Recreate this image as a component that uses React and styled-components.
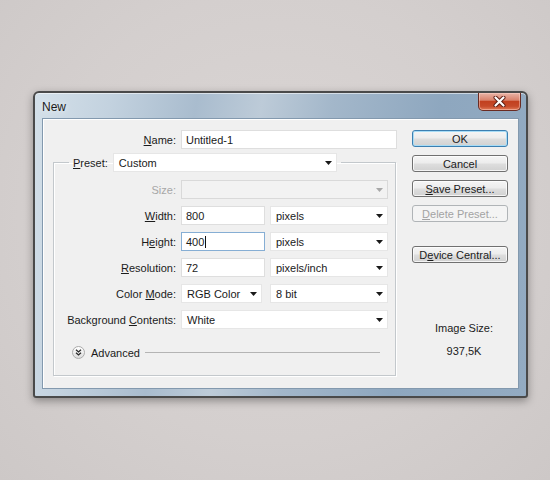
import React from 'react';
import styled, { createGlobalStyle, css } from 'styled-components';

const Global = createGlobalStyle`
  html, body { margin: 0; padding: 0; }
  body {
    width: 550px;
    height: 480px;
    overflow: hidden;
    background: #d4cfce;
    font-family: "Liberation Sans", Arial, sans-serif;
  }
`;

const Page = styled.div`
  width: 550px;
  height: 480px;
  box-sizing: border-box;
  padding: 91px 0 0 33px;
  background: radial-gradient(ellipse at 50% 45%, #dbd6d5 0%, #d4cfce 60%, #cdc8c7 100%);
`;

const Window = styled.div`
  width: 495px;
  height: 307px;
  box-sizing: border-box;
  border: 2px solid #4a4a4a;
  border-radius: 6px 6px 3px 3px;
  background: linear-gradient(100deg, #d4e0e9 0%, #c3d2df 14%, #a9bcce 30%, #bdcbd8 42%, #a3b7ca 55%, #8ea7bf 75%, #93abc2 100%);
  box-shadow: 0 3px 9px rgba(0, 0, 0, 0.35), inset 0 1px 0 rgba(255, 255, 255, 0.55);
  display: flex;
  flex-direction: column;
`;

const TitleBar = styled.div`
  height: 25px;
  flex: none;
  display: flex;
  align-items: flex-start;
  justify-content: space-between;
  padding: 0 5px 0 7px;
`;

const Title = styled.span`
  margin-top: 7px;
  font-size: 12px;
  line-height: 14px;
  color: #1b1b1b;
  text-shadow: 0 0 6px rgba(255, 255, 255, 0.9);
`;

const CloseButton = styled.div`
  width: 43px;
  height: 18px;
  box-sizing: border-box;
  border: 1px solid #6a2b22;
  border-top: none;
  border-radius: 0 0 5px 5px;
  background: linear-gradient(#e9b4a7 0%, #d9826c 42%, #c2401f 50%, #c64a2a 78%, #e27b58 100%);
  box-shadow: inset 0 0 0 1px rgba(255, 220, 210, 0.45);
  display: flex;
  align-items: center;
  justify-content: center;
`;

const Frame = styled.div`
  flex: 1;
  display: flex;
  padding: 0 7px 7px 7px;
  min-height: 0;
`;

const Client = styled.div`
  flex: 1;
  display: flex;
  gap: 15px;
  padding: 11px 0 0 10px;
  border: 1px solid #8399ae;
  background: #f0f0f0;
  box-shadow: inset 1px 1px 0 #ffffff;
  font-size: 11px;
  color: #1b1b1b;
`;

const LeftColumn = styled.div`
  width: 344px;
  display: flex;
  flex-direction: column;
`;

const NameRow = styled.div`
  display: grid;
  grid-template-columns: 123px 216px;
  column-gap: 5px;
  height: 19px;
  align-items: center;
`;

const Label = styled.div`
  text-align: right;
  white-space: nowrap;
  color: ${(p) => (p.$disabled ? '#a7a7a7' : '#1b1b1b')};
  align-self: center;
`;

const Key = styled.span`
  text-decoration: underline;
  text-underline-offset: 1px;
`;

const Field = styled.div`
  height: 19px;
  width: ${(p) => (p.$w ? `${p.$w}px` : 'auto')};
  box-sizing: border-box;
  display: flex;
  align-items: center;
  padding: 0 4px;
  background: #ffffff;
  border: 1px solid ${(p) => (p.$focused ? '#86aed4' : '#dedede')};
  color: #1a1a1a;
  white-space: nowrap;
`;

const Caret = styled.span`
  display: inline-block;
  width: 1px;
  height: 12px;
  margin-left: 1px;
  background: #111;
`;

const Select = styled.div`
  height: 19px;
  width: ${(p) => (p.$w ? `${p.$w}px` : 'auto')};
  box-sizing: border-box;
  display: flex;
  align-items: center;
  justify-content: space-between;
  padding: 0 4px 0 5px;
  background: ${(p) => (p.$disabled ? '#f2f2f2' : '#ffffff')};
  border: 1px solid ${(p) => (p.$disabled ? '#d9d9d9' : '#e6e6e6')};
  color: #1a1a1a;
  white-space: nowrap;
`;

const GroupBox = styled.fieldset`
  margin: 4px 0 0 0;
  padding: 0;
  width: 343px;
  min-width: 0;
  box-sizing: border-box;
  border: 1px solid #c3c8cc;
  box-shadow: 1px 1px 0 #ffffff, inset 1px 1px 0 #ffffff;
`;

const Legend = styled.legend`
  margin-left: 15px;
  padding: 0 4px;
`;

const LegendInner = styled.div`
  display: flex;
  align-items: center;
  gap: 5px;
  height: 19px;
`;

const FieldGrid = styled.div`
  display: grid;
  grid-template-columns: 122px 207px;
  grid-auto-rows: 19px;
  column-gap: 5px;
  row-gap: 7px;
  padding: 8px 7px 0 0;
`;

const ControlPair = styled.div`
  display: flex;
  justify-content: space-between;
`;

const AdvancedRow = styled.div`
  display: flex;
  align-items: center;
  gap: 6px;
  height: 13px;
  margin-top: 17px;
  padding: 0 15px 16px 18px;
`;

const ChevronBadge = styled.div`
  width: 13px;
  height: 13px;
  flex: none;
  box-sizing: border-box;
  border-radius: 50%;
  border: 1px solid #ababab;
  background: linear-gradient(#ffffff, #dcdcdc);
  display: flex;
  align-items: center;
  justify-content: center;
`;

const Rule = styled.div`
  flex: 1;
  height: 1px;
  margin-left: -1px;
  background: #b4b4b4;
`;

const RightColumn = styled.div`
  width: 96px;
  display: flex;
  flex-direction: column;
  gap: 8px;
`;

const Button = styled.div`
  height: 17px;
  box-sizing: border-box;
  display: flex;
  align-items: center;
  justify-content: center;
  border: 1px solid #707070;
  border-radius: 3px;
  background: linear-gradient(#f5f5f5 0%, #ececec 48%, #dedede 52%, #d1d1d1 100%);
  box-shadow: inset 0 0 0 1px rgba(255, 255, 255, 0.75);
  color: #1b1b1b;
  white-space: nowrap;
  margin-top: ${(p) => (p.$gapBefore ? `${p.$gapBefore}px` : '0')};
  ${(p) =>
    p.$primary &&
    css`
      border-color: #3c7fb1;
      box-shadow: inset 0 0 0 1px #a7dcf6;
    `}
  ${(p) =>
    p.$disabled &&
    css`
      border-color: #b0b4b7;
      background: #f4f4f4;
      box-shadow: none;
      color: #a3a3a3;
    `}
`;

const ImageSize = styled.div`
  margin-top: 51px;
  padding-left: 8px;
  display: flex;
  flex-direction: column;
  align-items: center;
  gap: 10px;
  line-height: 13px;
`;

const Arrow = ({ disabled }) => (
  <svg width="7" height="4" viewBox="0 0 7 4">
    <polygon points="0,0 7,0 3.5,4" fill={disabled ? '#a8a8a8' : '#1a1a1a'} />
  </svg>
);

const CloseGlyph = () => (
  <svg width="13" height="11" viewBox="0 0 13 11">
    <path d="M2.5 1.5 L10.5 9.5 M10.5 1.5 L2.5 9.5" stroke="#5a1b12" strokeWidth="4" strokeLinecap="round" />
    <path d="M2.5 1.5 L10.5 9.5 M10.5 1.5 L2.5 9.5" stroke="#ffffff" strokeWidth="2.2" strokeLinecap="round" />
  </svg>
);

const DoubleChevron = () => (
  <svg width="7" height="7" viewBox="0 0 7 7">
    <path d="M1 0.8 L3.5 3 L6 0.8 M1 3.8 L3.5 6 L6 3.8" fill="none" stroke="#2a2a2a" strokeWidth="1.3" />
  </svg>
);

export default function App() {
  return (
    <>
      <Global />
      <Page>
        <Window>
          <TitleBar>
            <Title>New</Title>
            <CloseButton>
              <CloseGlyph />
            </CloseButton>
          </TitleBar>
          <Frame>
            <Client>
              <LeftColumn>
                <NameRow>
                  <Label>
                    <Key>N</Key>ame:
                  </Label>
                  <Field>Untitled-1</Field>
                </NameRow>
                <GroupBox>
                  <Legend>
                    <LegendInner>
                      <Label>
                        <Key>P</Key>reset:
                      </Label>
                      <Select $w={224}>
                        Custom
                        <Arrow />
                      </Select>
                    </LegendInner>
                  </Legend>
                  <FieldGrid>
                    <Label $disabled>Size:</Label>
                    <Select $disabled>
                      <span />
                      <Arrow disabled />
                    </Select>

                    <Label>
                      <Key>W</Key>idth:
                    </Label>
                    <ControlPair>
                      <Field $w={84}>800</Field>
                      <Select $w={118}>
                        pixels
                        <Arrow />
                      </Select>
                    </ControlPair>

                    <Label>
                      H<Key>e</Key>ight:
                    </Label>
                    <ControlPair>
                      <Field $w={84} $focused>
                        400
                        <Caret />
                      </Field>
                      <Select $w={118}>
                        pixels
                        <Arrow />
                      </Select>
                    </ControlPair>

                    <Label>
                      <Key>R</Key>esolution:
                    </Label>
                    <ControlPair>
                      <Field $w={84}>72</Field>
                      <Select $w={118}>
                        pixels/inch
                        <Arrow />
                      </Select>
                    </ControlPair>

                    <Label>
                      Color <Key>M</Key>ode:
                    </Label>
                    <ControlPair>
                      <Select $w={81}>
                        RGB Color
                        <Arrow />
                      </Select>
                      <Select $w={118}>
                        8 bit
                        <Arrow />
                      </Select>
                    </ControlPair>

                    <Label>
                      Background <Key>C</Key>ontents:
                    </Label>
                    <Select>
                      White
                      <Arrow />
                    </Select>
                  </FieldGrid>
                  <AdvancedRow>
                    <ChevronBadge>
                      <DoubleChevron />
                    </ChevronBadge>
                    <span>Advanced</span>
                    <Rule />
                  </AdvancedRow>
                </GroupBox>
              </LeftColumn>
              <RightColumn>
                <Button $primary>OK</Button>
                <Button>Cancel</Button>
                <Button>
                  <Key>S</Key>ave Preset...
                </Button>
                <Button $disabled>
                  <Key>D</Key>elete Preset...
                </Button>
                <Button $gapBefore={16}>
                  D<Key>e</Key>vice Central...
                </Button>
                <ImageSize>
                  <span>Image Size:</span>
                  <span>937,5K</span>
                </ImageSize>
              </RightColumn>
            </Client>
          </Frame>
        </Window>
      </Page>
    </>
  );
}
